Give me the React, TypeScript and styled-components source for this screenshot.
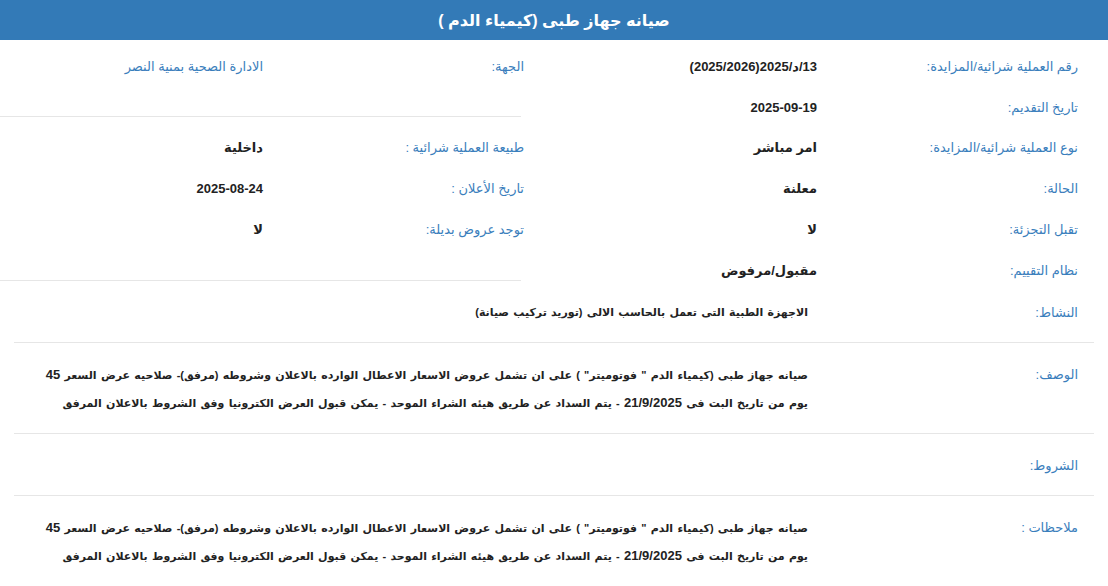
import styled, { createGlobalStyle } from "styled-components";

const GlobalStyle = createGlobalStyle`
    body {
        margin: 0;
        background: #fff;
        font-family: "Liberation Sans", "DejaVu Sans", sans-serif;
        font-size: 13px;
        color: #333;
    }
`

const Page = styled.div`
    direction: rtl;
    width: 1108px;
`

const Header = styled.h1`
    margin: 0;
    height: 40px;
    background: #337ab7;
    color: #fff;
    font-size: 16px;
    font-weight: bold;
    display: flex;
    align-items: center;
    justify-content: center;
`

const TopGrid = styled.div`
    display: grid;
    grid-template-columns: 1fr 1fr;
    height: 241px;
`

const Column = styled.div`
    padding-top: 6px;
`

const Block = styled.div<{ $padTop?: number; $height?: number }>`
    padding-top: ${(p) => p.$padTop ?? 0}px;
    height: ${(p) => (p.$height ? `${p.$height}px` : "auto")};
    box-sizing: border-box;
`

const Divider = styled.hr`
    margin: 0 33px 0 0;
    border: 0;
    border-top: 1px solid #e6e6e6;
    width: 521px;
`

const Row = styled.div`
    display: flex;
    align-items: center;
    height: 40.8px;
    padding-right: 30px;
`

const Label = styled.span<{ $width?: number }>`
    width: ${(p) => p.$width ?? 261}px;
    flex-shrink: 0;
    color: #3a7ebc;
`

const Value = styled.span<{ $link?: boolean }>`
    color: ${(p) => (p.$link ? "#3a7ebc" : "#222")};
    font-weight: ${(p) => (p.$link ? "normal" : "bold")};
`

const FullList = styled.div`
    margin: 0 14px;
`

const FullRow = styled.div`
    display: flex;
    align-items: flex-start;
    padding: 18px 16px 16px 31px;
    line-height: 27px;
    border-bottom: 1px solid #e6e6e6;
    min-height: 27px;
`

const Text = styled.div`
    flex: 1;
    color: #222;
    font-weight: bold;
    font-size: 11px;
    word-spacing: 1.2px;
`

const Num = styled.span`
    font-size: 13px;
`

const Description = () => (
    <>
        صيانه جهاز طبى (كيمياء الدم " فوتوميتر" ) على ان تشمل عروض الاسعار الاعطال الوارده بالاعلان وشروطه (مرفق)- صلاحيه عرض السعر <Num>45</Num> يوم من تاريخ البت فى <Num>21/9/2025</Num> - يتم السداد عن طريق هيئه الشراء الموحد - يمكن قبول العرض الكترونيا وفق الشروط بالاعلان المرفق
    </>
)

const rightRows = [
    ["رقم العملية شرائية/المزايدة:", "13/د/2025(2025/2026)"],
    ["تاريخ التقديم:", "2025-09-19"],
    ["نوع العملية شرائية/المزايدة:", "امر مباشر"],
    ["الحالة:", "معلنة"],
    ["تقبل التجزئة:", "لا"],
    ["نظام التقييم:", "مقبول/مرفوض"],
]

const leftRows = [
    ["طبيعة العملية شرائية :", "داخلية"],
    ["تاريخ الأعلان :", "2025-08-24"],
    ["توجد عروض بديلة:", "لا"],
]

const fullRows = [
    { label: "النشاط:", value: "الاجهزة الطبية التى تعمل بالحاسب الالى (توريد تركيب صيانة)" },
    { label: "الوصف:", value: <Description /> },
    { label: "الشروط:", value: "" },
    { label: "ملاحظات :", value: <Description /> },
]

const App = () => {
    return (
        <Page>
            <GlobalStyle />
            <Header>صيانه جهاز طبى (كيمياء الدم )</Header>
            <TopGrid>
                <Column>
                    {rightRows.map(([label, value]) => (
                        <Row key={label}>
                            <Label>{label}</Label>
                            <Value>{value}</Value>
                        </Row>
                    ))}
                </Column>
                <Column>
                    <Block $height={70}>
                        <Row>
                            <Label>الجهة:</Label>
                            <Value $link>الادارة الصحية بمنية النصر</Value>
                        </Row>
                    </Block>
                    <Divider />
                    <Block $padTop={10.6} $height={163}>
                        {leftRows.map(([label, value]) => (
                            <Row key={label}>
                                <Label>{label}</Label>
                                <Value>{value}</Value>
                            </Row>
                        ))}
                    </Block>
                    <Divider />
                </Column>
            </TopGrid>
            <FullList>
                {fullRows.map(({ label, value }) => (
                    <FullRow key={label}>
                        <Label $width={270}>{label}</Label>
                        <Text>{value}</Text>
                    </FullRow>
                ))}
            </FullList>
        </Page>
    )
}

export default App
